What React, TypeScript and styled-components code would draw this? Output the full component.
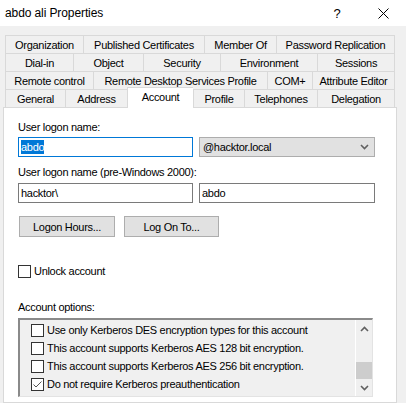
import React from 'react';
import styled, { createGlobalStyle } from 'styled-components';

const GlobalStyle = createGlobalStyle`
  html, body {
    margin: 0;
    padding: 0;
    background: #f0f0f0;
  }
`;

const Window = styled.div`
  width: 406px;
  height: 403px;
  overflow: hidden;
  display: flex;
  flex-direction: column;
  background: #f0f0f0;
  font-family: "Liberation Sans", Arial, sans-serif;
  font-size: 11px;
  letter-spacing: -0.3px;
  color: #000;
`;

const TitleBar = styled.div`
  flex: none;
  height: 26px;
  display: flex;
  align-items: center;
  background: #fff;
  padding-left: 5px;
`;

const Title = styled.div`
  flex: 1;
  font-size: 12px;
  letter-spacing: -0.1px;
`;

const CaptionButton = styled.div`
  width: 46px;
  height: 26px;
  display: flex;
  align-items: center;
  justify-content: center;
  font-size: 13px;
  letter-spacing: 0;
`;

const Tabs = styled.div`
  flex: none;
  display: flex;
  flex-direction: column;
  margin: 9px 11px 0 5px;
`;

const TabRow = styled.div`
  display: flex;
  height: 18px;
  align-items: flex-end;
`;

const Tab = styled.div<{ $w: number; $active?: boolean }>`
  box-sizing: border-box;
  width: ${p => p.$w}px;
  height: ${p => (p.$active ? 21 : 18)}px;
  margin-bottom: ${p => (p.$active ? -1 : 0)}px;
  display: flex;
  align-items: center;
  justify-content: center;
  padding-bottom: ${p => (p.$active ? 3 : 0)}px;
  border-top: 1px solid #d9d9d9;
  border-left: 1px solid #d9d9d9;
  background: ${p => (p.$active ? '#fff' : '#f0f0f0')};
  position: relative;
  z-index: ${p => (p.$active ? 1 : 0)};
  white-space: nowrap;

  &:last-child {
    border-right: 1px solid #d9d9d9;
  }
`;

const Panel = styled.div`
  flex: 1;
  margin: 0 9px 0 3px;
  background: #fff;
  border: 1px solid #d9d9d9;
  padding: 12px 0 0 14px;
  display: flex;
  flex-direction: column;
`;

const Label = styled.div<{ $gap?: number }>`
  line-height: 14px;
  margin-top: ${p => p.$gap ?? 0}px;
`;

const FieldRow = styled.div<{ $gap?: number }>`
  display: flex;
  gap: 6px;
  margin-top: ${p => p.$gap ?? 0}px;
`;

const TextBox = styled.div<{ $w: number; $focused?: boolean }>`
  box-sizing: border-box;
  width: ${p => p.$w}px;
  height: 20px;
  border: 1px solid ${p => (p.$focused ? '#0078d7' : '#7a7a7a')};
  padding-left: 2px;
  display: flex;
  align-items: center;
`;

const Selected = styled.span`
  background: #0078d7;
  color: #fff;
  line-height: 14px;
`;

const ComboBox = styled.div<{ $w: number }>`
  box-sizing: border-box;
  width: ${p => p.$w}px;
  height: 20px;
  border: 1px solid #adadad;
  background: #e1e1e1;
  padding: 0 5px 0 3px;
  display: flex;
  align-items: center;
  justify-content: space-between;
`;

const ButtonRow = styled.div`
  display: flex;
  gap: 9px;
  margin: 13px 0 0 1px;
`;

const Button = styled.div<{ $w: number }>`
  box-sizing: border-box;
  width: ${p => p.$w}px;
  height: 21px;
  border: 1px solid #adadad;
  background: #e1e1e1;
  display: flex;
  align-items: center;
  justify-content: center;
`;

const CheckRow = styled.div<{ $gap?: number }>`
  display: flex;
  align-items: center;
  gap: 3px;
  height: 18px;
  margin-top: ${p => p.$gap ?? 0}px;
  white-space: nowrap;
`;

const Box = styled.div`
  box-sizing: border-box;
  width: 13px;
  height: 13px;
  flex: none;
  border: 1px solid #333;
  background: #fff;
  display: flex;
  align-items: center;
  justify-content: center;
`;

const ListBox = styled.div`
  box-sizing: border-box;
  width: 355px;
  height: 79px;
  margin-top: 4px;
  display: flex;
  background: #f0f0f0;
  border-style: solid;
  border-width: 2px 1px 1px 2px;
  border-color: #8a8a8a #e3e3e3 #e3e3e3 #8a8a8a;
`;

const ListItems = styled.div`
  flex: 1;
  padding: 1px 0 0 11px;
  overflow: hidden;
`;

const ScrollBar = styled.div`
  width: 16px;
  flex: none;
  display: flex;
  flex-direction: column;
  border-left: 1px solid #fff;
  background: #f0f0f0;
`;

const ScrollArrow = styled.div`
  height: 17px;
  display: flex;
  align-items: center;
  justify-content: center;
`;

const ScrollTrack = styled.div`
  flex: 1;
  display: flex;
  flex-direction: column;
  justify-content: flex-end;
`;

const Thumb = styled.div`
  height: 17px;
  background: #cdcdcd;
`;

const Chevron = ({ up }: { up?: boolean }) => (
  <svg width="9" height="6" viewBox="0 0 9 6">
    <polyline
      points={up ? '1,5 4.5,1.5 8,5' : '1,1 4.5,4.5 8,1'}
      fill="none"
      stroke="#606060"
      strokeWidth="1.6"
    />
  </svg>
);

const CheckBox = ({ checked }: { checked?: boolean }) => (
  <Box>
    {checked && (
      <svg width="11" height="11" viewBox="0 0 11 11">
        <polyline points="1.5,5.5 4,8 9.5,2.5" fill="none" stroke="#555" strokeWidth="1" />
      </svg>
    )}
  </Box>
);

const tabRows: { label: string; w: number; active?: boolean }[][] = [
  [
    { label: 'Organization', w: 78 },
    { label: 'Published Certificates', w: 121 },
    { label: 'Member Of', w: 72 },
    { label: 'Password Replication', w: 119 },
  ],
  [
    { label: 'Dial-in', w: 68 },
    { label: 'Object', w: 70 },
    { label: 'Security', w: 77 },
    { label: 'Environment', w: 97 },
    { label: 'Sessions', w: 78 },
  ],
  [
    { label: 'Remote control', w: 88 },
    { label: 'Remote Desktop Services Profile', w: 174 },
    { label: 'COM+', w: 45 },
    { label: 'Attribute Editor', w: 83 },
  ],
  [
    { label: 'General', w: 60 },
    { label: 'Address', w: 62 },
    { label: 'Account', w: 66, active: true },
    { label: 'Profile', w: 51 },
    { label: 'Telephones', w: 73 },
    { label: 'Delegation', w: 78 },
  ],
];

const options = [
  { label: 'Use only Kerberos DES encryption types for this account', checked: false },
  { label: 'This account supports Kerberos AES 128 bit encryption.', checked: false },
  { label: 'This account supports Kerberos AES 256 bit encryption.', checked: false },
  { label: 'Do not require Kerberos preauthentication', checked: true },
];

const App = () => {
  return (
    <Window>
      <GlobalStyle />
      <TitleBar>
        <Title>abdo ali Properties</Title>
        <CaptionButton>?</CaptionButton>
        <CaptionButton>
          <svg width="11" height="11" viewBox="0 0 11 11">
            <path d="M0.5 0.5 L10.5 10.5 M10.5 0.5 L0.5 10.5" stroke="#000" strokeWidth="1" />
          </svg>
        </CaptionButton>
      </TitleBar>

      <Tabs>
        {tabRows.map((row, i) => (
          <TabRow key={i}>
            {row.map(t => (
              <Tab key={t.label} $w={t.w} $active={t.active}>
                {t.label}
              </Tab>
            ))}
          </TabRow>
        ))}
      </Tabs>

      <Panel>
        <Label>User logon name:</Label>
        <FieldRow $gap={3}>
          <TextBox $w={175} $focused>
            <Selected>abdo</Selected>
          </TextBox>
          <ComboBox $w={176}>
            <span>@hacktor.local</span>
            <Chevron />
          </ComboBox>
        </FieldRow>

        <Label $gap={8}>User logon name (pre-Windows 2000):</Label>
        <FieldRow $gap={4}>
          <TextBox $w={175}>hacktor\</TextBox>
          <TextBox $w={176}>abdo</TextBox>
        </FieldRow>

        <ButtonRow>
          <Button $w={96}>Logon Hours...</Button>
          <Button $w={95}>Log On To...</Button>
        </ButtonRow>

        <CheckRow $gap={25}>
          <CheckBox />
          <span>Unlock account</span>
        </CheckRow>

        <Label $gap={20}>Account options:</Label>
        <ListBox>
          <ListItems>
            {options.map(o => (
              <CheckRow key={o.label}>
                <CheckBox checked={o.checked} />
                <span>{o.label}</span>
              </CheckRow>
            ))}
          </ListItems>
          <ScrollBar>
            <ScrollArrow>
              <Chevron up />
            </ScrollArrow>
            <ScrollTrack>
              <Thumb />
            </ScrollTrack>
            <ScrollArrow>
              <Chevron />
            </ScrollArrow>
          </ScrollBar>
        </ListBox>
      </Panel>
    </Window>
  );
};

export default App;
